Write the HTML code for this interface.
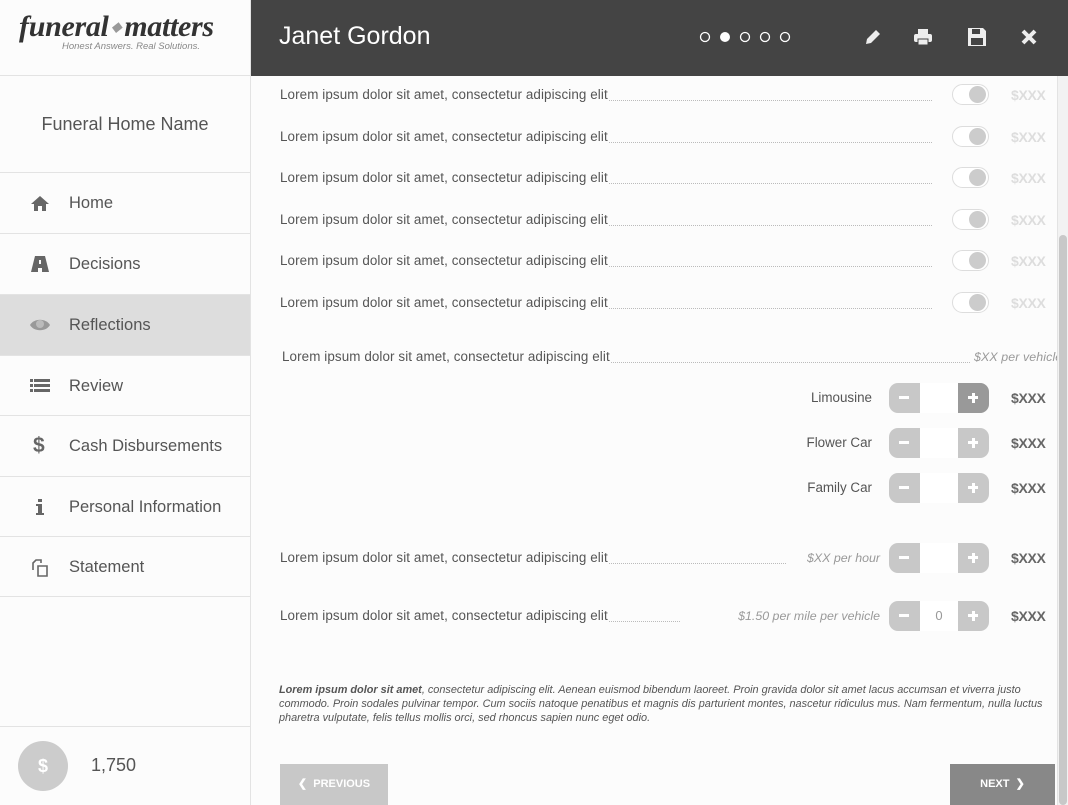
<!DOCTYPE html>
<html><head><meta charset="utf-8"><style>
*{margin:0;padding:0;box-sizing:border-box}
body{width:1068px;height:805px;overflow:hidden;background:#fcfcfc;font-family:"Liberation Sans",sans-serif;color:#555;position:relative}
.abs{position:absolute}
#side{left:0;top:0;width:251px;height:805px;border-right:1px solid #e3e3e3;background:#fcfcfc}
.nav{position:absolute;left:0;width:250px;height:61px;border-top:1px solid #e3e3e3;font-size:16.5px;line-height:60px;padding-left:69px;color:#555}
.nav svg{position:absolute;left:30px;top:21px}
#hdr{left:251px;top:0;width:817px;height:76px;background:#444}
.row{position:absolute;left:280px;width:710px;font-size:13.4px;letter-spacing:0.1px;color:#555;height:20px}
.row .t{position:absolute;left:0;top:0;background:#fcfcfc;padding-right:1px}
.dots{position:absolute;left:0;top:13px;border-bottom:1px dotted #bbb}
.tog{position:absolute;left:672px;top:-3px;width:37px;height:21px;border:1px solid #ddd;border-radius:11px;background:#fff}
.tog:after{content:"";position:absolute;right:2px;top:1px;width:17px;height:17px;border-radius:50%;background:#ccc}
.price{position:absolute;left:1011px;font-size:14px;font-weight:bold;color:#ddd;letter-spacing:-0.3px}
.step{position:absolute;left:889px;width:100px;height:30px;border-radius:9px;background:#c8c8c8;overflow:hidden}
.step .m{position:absolute;left:0;top:0;width:31px;height:30px}
.step .m:after{content:"";position:absolute;left:10px;top:13px;width:10px;height:3px;background:#fff}
.step .w{position:absolute;left:31px;top:0;width:38px;height:30px;background:#fff;text-align:center;font-size:13px;line-height:30px;color:#999}
.step .p{position:absolute;right:0;top:0;width:31px;height:30px}
.step .p:before{content:"";position:absolute;left:10px;top:13px;width:10px;height:3px;background:#fff}
.step .p:after{content:"";position:absolute;left:13.5px;top:9.5px;width:3px;height:10px;background:#fff}
.lbl{position:absolute;font-size:13.4px;color:#555;text-align:right;right:196px}
.dp{position:absolute;left:1011px;font-size:14px;font-weight:bold;color:#666;letter-spacing:-0.3px}
.it{position:absolute;font-size:12.4px;font-style:italic;color:#999;text-align:right}
</style></head><body>
<div id="side" class="abs">
  <div class="abs" style="left:19px;top:10px;font-family:'Liberation Serif',serif;font-style:italic;font-weight:bold;font-size:30px;color:#333;letter-spacing:-0.3px;white-space:nowrap">funeral<span style="font-size:13px;color:#999;vertical-align:5px"> ◆ </span>matters</div>
  <div class="abs" style="left:62px;top:41px;font-size:9.5px;font-style:italic;color:#888">Honest Answers. Real Solutions.</div>
  <div class="abs" style="left:0;top:75px;width:250px;border-top:1px solid #e3e3e3"></div>
  <div class="abs" style="left:0;top:114px;width:250px;text-align:center;font-size:18px;color:#555">Funeral Home Name</div>
  <div class="nav" style="top:172px"><svg width="20" height="18" viewBox="0 0 20 18"><path d="M10 2L1 10h3v7h4v-5h4v5h4v-7h3z" fill="#666"/></svg>Home</div>
  <div class="nav" style="top:233px"><svg width="20" height="18" viewBox="0 0 20 18"><path d="M5 1h10l4 16h-7v-4h-4v4H1z" fill="#666"/><rect x="9" y="5" width="2" height="4" fill="#fcfcfc"/></svg>Decisions</div>
  <div class="nav" style="top:294px;background:#ddd"><svg width="20" height="18" viewBox="0 0 20 18"><path d="M0 9C4 2 16 2 20 9C16 16 4 16 0 9z" fill="#999"/><circle cx="10" cy="8" r="4" fill="#bbb"/></svg>Reflections</div>
  <div class="nav" style="top:355px"><svg width="20" height="18" viewBox="0 0 20 18"><g fill="#666"><rect x="0" y="2" width="3" height="3"/><rect x="4" y="2" width="16" height="3"/><rect x="0" y="7" width="3" height="3"/><rect x="4" y="7" width="16" height="3"/><rect x="0" y="12" width="3" height="3"/><rect x="4" y="12" width="16" height="3"/></g></svg>Review</div>
  <div class="nav" style="top:415px"><span style="position:absolute;left:33px;top:0;font-size:21px;font-weight:bold;color:#666">$</span>Cash Disbursements</div>
  <div class="nav" style="top:476px"><svg width="20" height="18" viewBox="0 0 20 18"><g fill="#666"><rect x="8" y="1" width="4" height="3"/><path d="M6 6h6v9h2v2H6v-2h2V8H6z"/></g></svg>Personal Information</div>
  <div class="nav" style="top:536px"><svg width="20" height="20" viewBox="0 0 20 20"><g fill="none" stroke="#666" stroke-width="1.6"><path d="M3 12V5l3-3h5v3"/><path d="M8 8h9v10H8z"/></g></svg>Statement</div>
  <div class="abs" style="left:0;top:596px;width:250px;border-top:1px solid #e3e3e3"></div>
  <div class="abs" style="left:0;top:726px;width:250px;border-top:1px solid #e3e3e3"></div>
  <div class="abs" style="left:18px;top:741px;width:50px;height:50px;border-radius:50%;background:#ccc;color:#fff;text-align:center;line-height:50px;font-size:18px;font-weight:bold">$</div>
  <div class="abs" style="left:91px;top:755px;font-size:18px;color:#555">1,750</div>
</div>
<div id="hdr" class="abs">
  <div class="abs" style="left:28px;top:22px;font-size:25px;color:#fff">Janet Gordon</div>
  <svg class="abs" style="left:445px;top:30px" width="100" height="14">
    <g fill="none" stroke="#fff" stroke-width="1.3"><circle cx="9" cy="7" r="4.5"/><circle cx="49" cy="7" r="4.5"/><circle cx="69" cy="7" r="4.5"/><circle cx="89" cy="7" r="4.5"/></g><circle cx="29" cy="7" r="5" fill="#fff"/></svg>
  <svg class="abs" style="left:612px;top:27px" width="20" height="20"><path d="M3 17l1-5 9-9 4 4-9 9z" fill="#eee"/></svg>
  <svg class="abs" style="left:662px;top:27px" width="20" height="20"><rect x="5" y="2" width="10" height="5" fill="#eee"/><rect x="1" y="7" width="18" height="8" rx="2" fill="#eee"/><rect x="5" y="12" width="10" height="6" fill="#eee" stroke="#444"/></svg>
  <svg class="abs" style="left:716px;top:27px" width="20" height="20"><path d="M1 1h15l3 3v15H1z" fill="#eee"/><rect x="5" y="2" width="8" height="5" fill="#444"/><rect x="4" y="11" width="12" height="7" fill="#444"/></svg>
  <svg class="abs" style="left:769px;top:28px" width="18" height="18"><path d="M3 3l12 12M15 3L3 15" stroke="#eee" stroke-width="4"/></svg>
</div>
<div class="abs" style="left:1057px;top:76px;width:11px;height:729px;background:#f2f2f2;border-left:1px solid #e3e3e3"></div>
<div class="abs" style="left:1059px;top:235px;width:8px;height:570px;background:#c8c8c8;border-radius:4px"></div>

<div class="row" style="top:87px"><div class="dots" style="width:652px"></div><span class="t">Lorem ipsum dolor sit amet, consectetur adipiscing elit</span><div class="tog"></div></div>
<div class="row" style="top:129px"><div class="dots" style="width:652px"></div><span class="t">Lorem ipsum dolor sit amet, consectetur adipiscing elit</span><div class="tog"></div></div>
<div class="row" style="top:170px"><div class="dots" style="width:652px"></div><span class="t">Lorem ipsum dolor sit amet, consectetur adipiscing elit</span><div class="tog"></div></div>
<div class="row" style="top:212px"><div class="dots" style="width:652px"></div><span class="t">Lorem ipsum dolor sit amet, consectetur adipiscing elit</span><div class="tog"></div></div>
<div class="row" style="top:253px"><div class="dots" style="width:652px"></div><span class="t">Lorem ipsum dolor sit amet, consectetur adipiscing elit</span><div class="tog"></div></div>
<div class="row" style="top:295px"><div class="dots" style="width:652px"></div><span class="t">Lorem ipsum dolor sit amet, consectetur adipiscing elit</span><div class="tog"></div></div>
<div class="price" style="top:87px">$XXX</div><div class="price" style="top:129px">$XXX</div><div class="price" style="top:170px">$XXX</div><div class="price" style="top:212px">$XXX</div><div class="price" style="top:253px">$XXX</div><div class="price" style="top:295px">$XXX</div>

<div class="row" style="left:282px;top:349px;width:775px;overflow:hidden"><div class="dots" style="width:688px"></div><span class="t">Lorem ipsum dolor sit amet, consectetur adipiscing elit</span><span class="it" style="left:692px;top:1px;white-space:nowrap">$XX per vehicle</span></div>

<div class="lbl" style="top:390px">Limousine</div>
<div class="step" style="top:383px"><div class="m"></div><div class="w"></div><div class="p" style="background:#999"></div></div>
<div class="dp" style="top:390px">$XXX</div>
<div class="lbl" style="top:435px">Flower Car</div>
<div class="step" style="top:428px"><div class="m"></div><div class="w"></div><div class="p"></div></div>
<div class="dp" style="top:435px">$XXX</div>
<div class="lbl" style="top:480px">Family Car</div>
<div class="step" style="top:473px"><div class="m"></div><div class="w"></div><div class="p"></div></div>
<div class="dp" style="top:480px">$XXX</div>

<div class="row" style="top:550px"><div class="dots" style="width:506px"></div><span class="t">Lorem ipsum dolor sit amet, consectetur adipiscing elit</span></div>
<div class="it" style="left:760px;width:120px;top:551px">$XX per hour</div>
<div class="step" style="top:543px"><div class="m"></div><div class="w"></div><div class="p"></div></div>
<div class="dp" style="top:550px">$XXX</div>
<div class="row" style="top:608px"><div class="dots" style="width:400px"></div><span class="t">Lorem ipsum dolor sit amet, consectetur adipiscing elit</span></div>
<div class="it" style="left:690px;width:190px;top:609px">$1.50 per mile per vehicle</div>
<div class="step" style="top:601px"><div class="m"></div><div class="w">0</div><div class="p"></div></div>
<div class="dp" style="top:608px">$XXX</div>

<div class="abs" style="left:279px;top:683px;width:778px;font-size:10.9px;font-style:italic;line-height:14px;color:#555"><b>Lorem ipsum dolor sit amet</b>, consectetur adipiscing elit. Aenean euismod bibendum laoreet. Proin gravida dolor sit amet lacus accumsan et viverra justo commodo. Proin sodales pulvinar tempor. Cum sociis natoque penatibus et magnis dis parturient montes, nascetur ridiculus mus. Nam fermentum, nulla luctus pharetra vulputate, felis tellus mollis orci, sed rhoncus sapien nunc eget odio.</div>

<div class="abs" style="left:280px;top:764px;width:108px;height:41px;background:#c8c8c8;color:#fff;font-size:11px;font-weight:bold;text-align:center;line-height:40px">&#10094;&nbsp; PREVIOUS</div>
<div class="abs" style="left:950px;top:764px;width:105px;height:41px;background:#888;color:#fff;font-size:11px;font-weight:bold;text-align:center;line-height:40px">NEXT &nbsp;&#10095;</div>
</body></html>
